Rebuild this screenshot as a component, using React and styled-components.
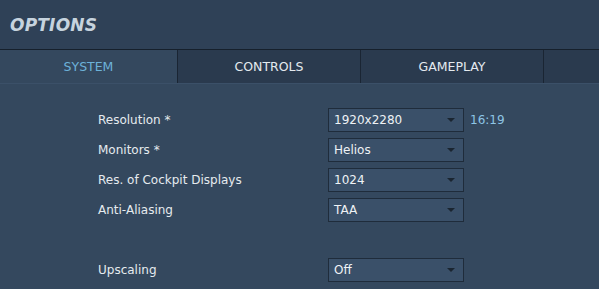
import React from 'react';
import styled, { createGlobalStyle } from 'styled-components';

const GlobalStyle = createGlobalStyle`
  html, body {
    margin: 0;
    padding: 0;
    background: #34485e;
    font-family: 'DejaVu Sans', 'Liberation Sans', sans-serif;
  }
`;

const Page = styled.div`
  width: 599px;
  height: 289px;
  overflow: hidden;
  background: #34485e;
`;

const Header = styled.div`
  display: flex;
  align-items: center;
  padding-left: 10px;
  background: #2f4157;
  border-bottom: 1px solid #16202c;
  box-sizing: border-box;
  height: 50px;
`;

const Title = styled.h1`
  margin: 0;
  font-size: 17px;
  font-weight: bold;
  font-style: italic;
  color: #c6d3de;
  letter-spacing: 0.2px;
`;

const TabBar = styled.div`
  display: flex;
  height: 33px;
  background: #2a3a4e;
  border-bottom: 1px solid #3b5068;
`;

const Tab = styled.div`
  width: ${(p) => p.w}px;
  flex: none;
  display: flex;
  align-items: center;
  justify-content: center;
  font-size: 12.5px;
  color: ${(p) => (p.active ? '#6db2d9' : '#e4eaef')};
  background: ${(p) => (p.active ? '#34485e' : '#2a3a4e')};
  border-right: 1px solid #1a2533;
  box-sizing: border-box;
`;

const Filler = styled.div`
  flex: 1;
`;

const Body = styled.div`
  padding: 24px 0 0 98px;
  display: flex;
  flex-direction: column;
  gap: 6px;
`;

const Row = styled.div`
  display: flex;
  align-items: center;
  height: 24px;
  margin-top: ${(p) => (p.spaced ? '30px' : '0')};
`;

const Label = styled.div`
  width: 230px;
  font-size: 12px;
  color: #e6ebef;
`;

const Select = styled.div`
  width: 136px;
  height: 24px;
  box-sizing: border-box;
  border: 1px solid #1f2c3b;
  background: #3a5069;
  display: flex;
  align-items: center;
  justify-content: space-between;
  padding: 0 8px 0 5px;
  font-size: 12px;
  color: #eef2f5;
`;

const Arrow = styled.span`
  width: 0;
  height: 0;
  border-left: 4px solid transparent;
  border-right: 4px solid transparent;
  border-top: 4px solid #1a2531;
`;

const Hint = styled.div`
  margin-left: 6px;
  font-size: 12px;
  color: #8ec5e5;
`;

const rows = [
  { label: 'Resolution *', value: '1920x2280', hint: '16:19' },
  { label: 'Monitors *', value: 'Helios' },
  { label: 'Res. of Cockpit Displays', value: '1024' },
  { label: 'Anti-Aliasing', value: 'TAA' },
  { label: 'Upscaling', value: 'Off', spaced: true },
];

const App = () => (
  <Page>
    <GlobalStyle />
    <Header>
      <Title>OPTIONS</Title>
    </Header>
    <TabBar>
      <Tab active w={178}>SYSTEM</Tab>
      <Tab w={183}>CONTROLS</Tab>
      <Tab w={183}>GAMEPLAY</Tab>
      <Filler />
    </TabBar>
    <Body>
      {rows.map((r) => (
        <Row key={r.label} spaced={r.spaced}>
          <Label>{r.label}</Label>
          <Select>
            <span>{r.value}</span>
            <Arrow />
          </Select>
          {r.hint && <Hint>{r.hint}</Hint>}
        </Row>
      ))}
    </Body>
  </Page>
);

export default App;
